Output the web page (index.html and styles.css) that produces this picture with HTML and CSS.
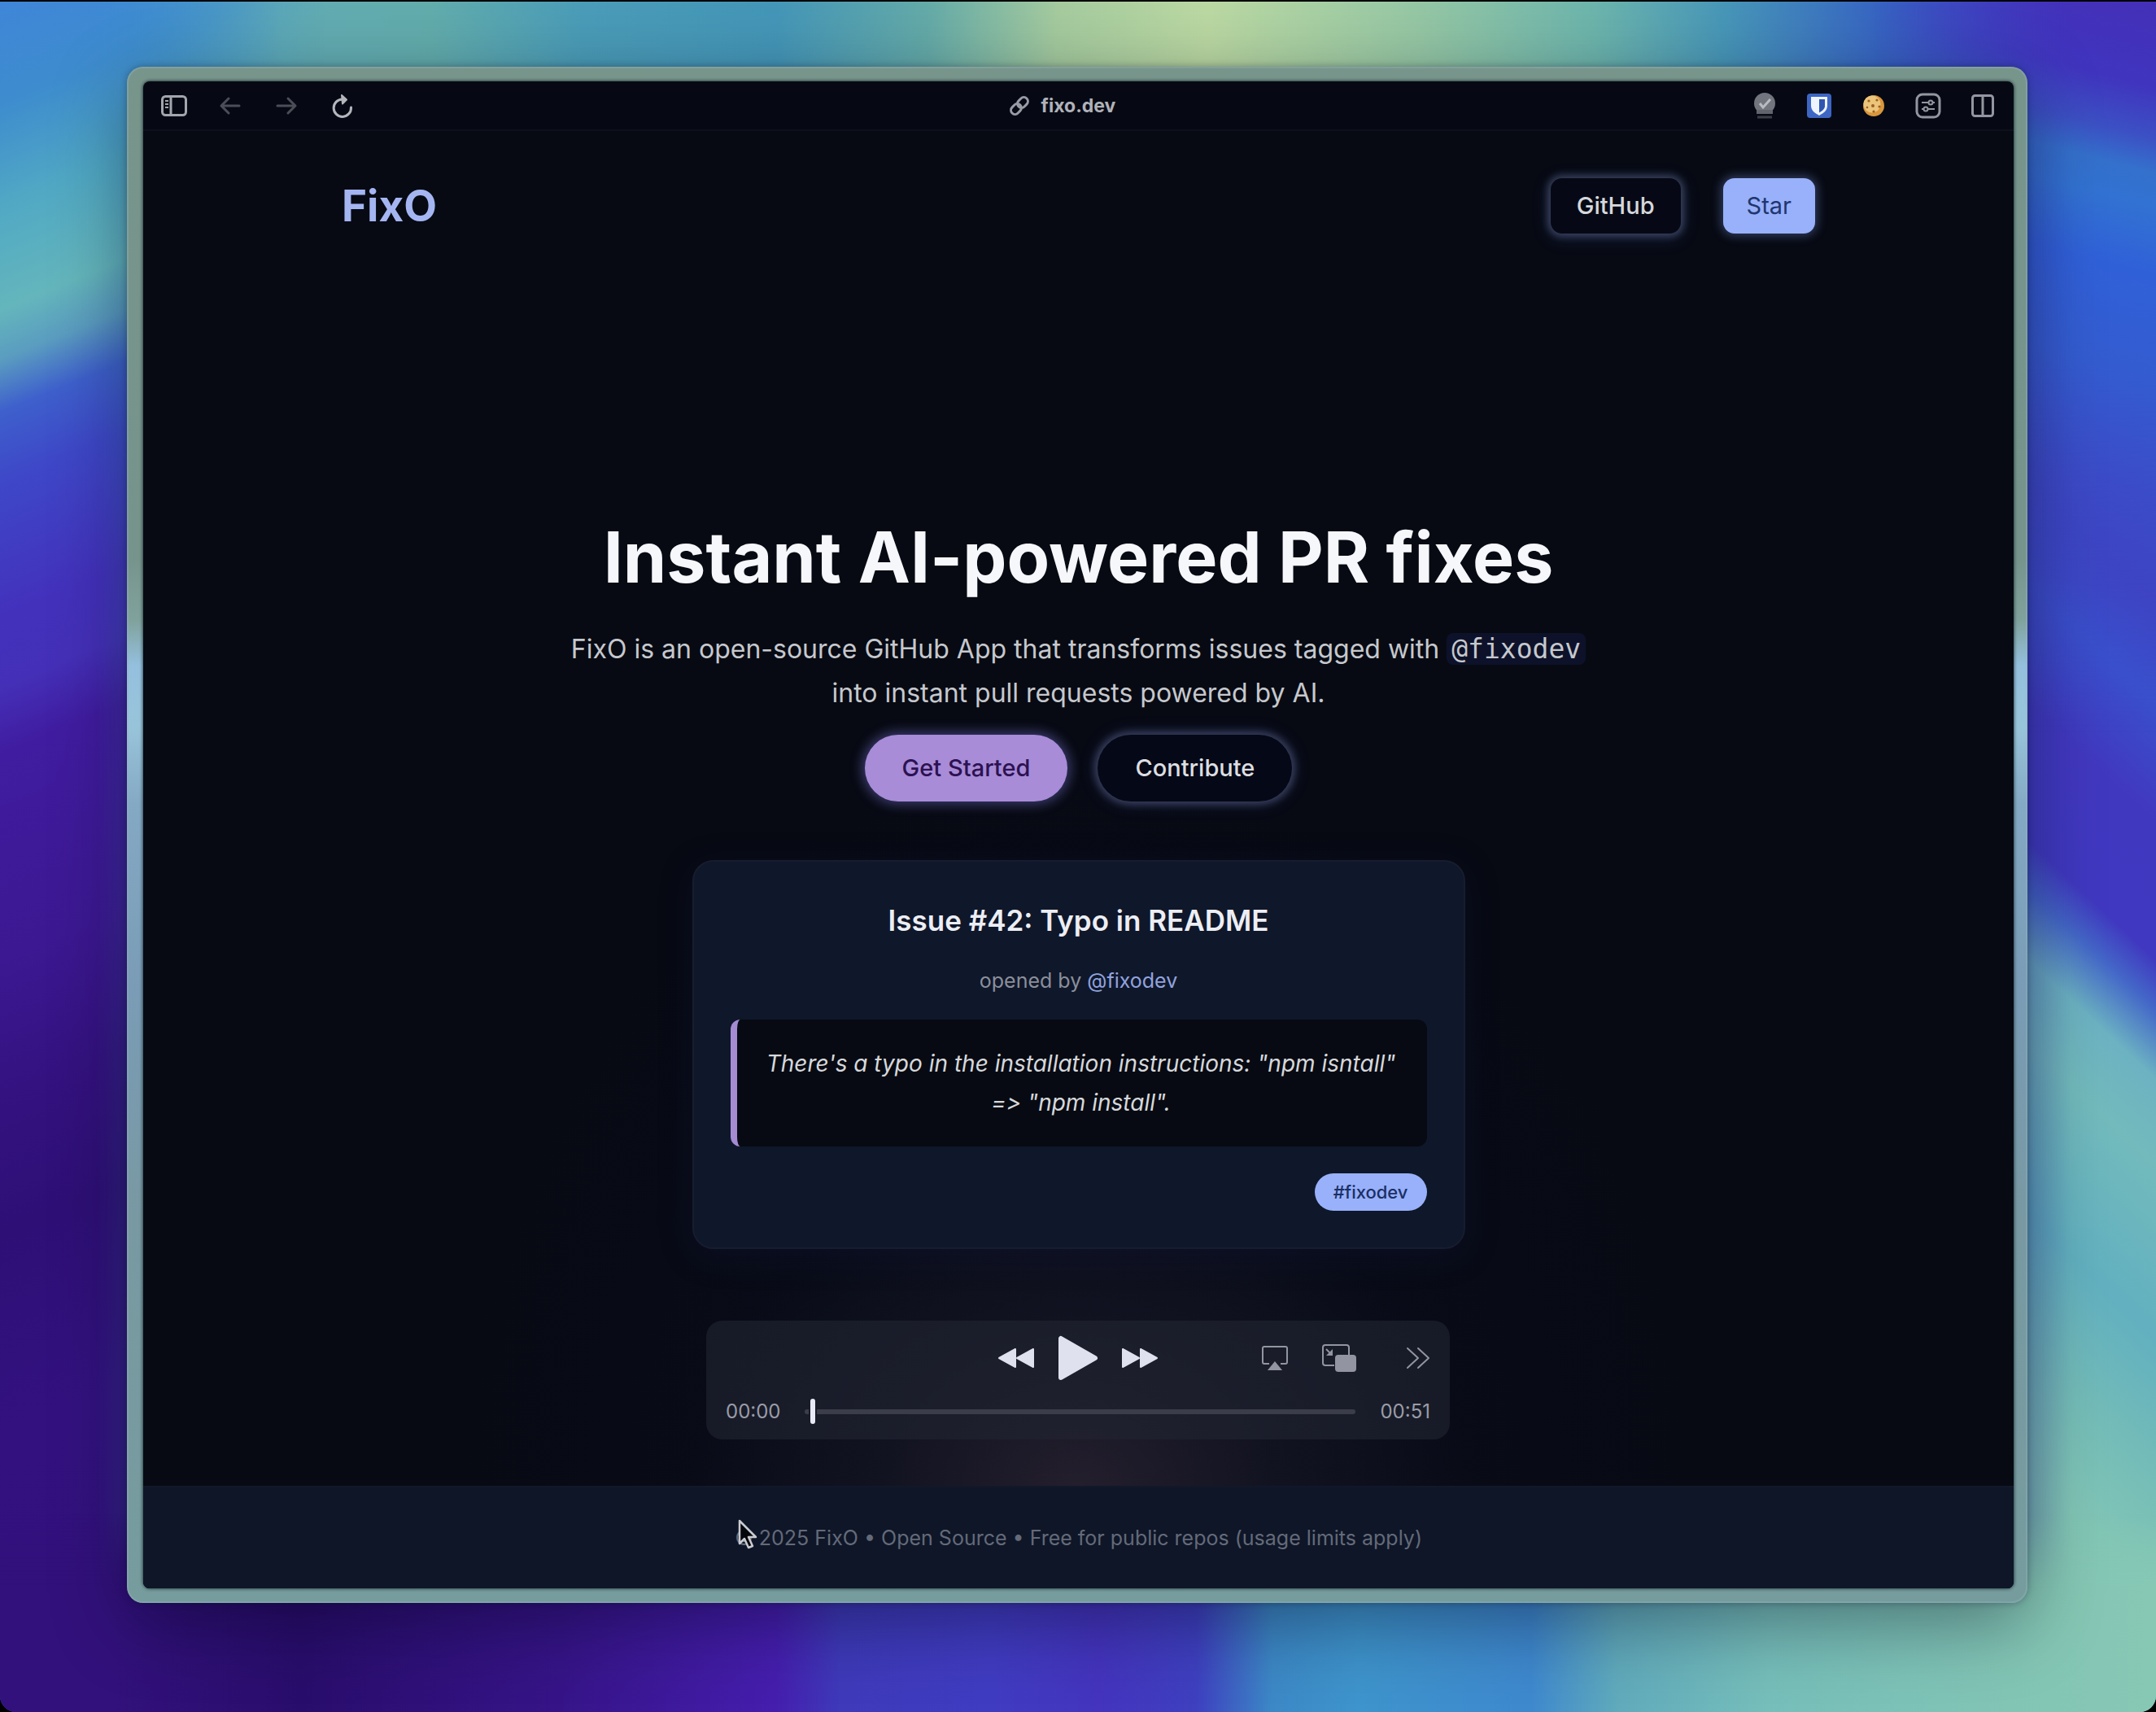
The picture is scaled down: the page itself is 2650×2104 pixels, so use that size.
FILE: index.html
```html
<!DOCTYPE html>
<html lang="en">
<head>
<meta charset="utf-8">
<meta name="viewport" content="width=device-width, initial-scale=1">
<title>FixO</title>
<link rel="stylesheet" href="styles.css">
</head>
<body>
<div class="desktop">
  <svg class="wallpaper" viewBox="0 0 2650 2104" preserveAspectRatio="none" aria-hidden="true">
    <defs>
      <linearGradient id="top" gradientUnits="userSpaceOnUse" x1="0" y1="0" x2="2650" y2="0">
        <stop offset="0" stop-color="#3f88d2"/><stop offset=".06" stop-color="#4092cc"/><stop offset=".13" stop-color="#62acb4"/><stop offset=".2" stop-color="#62acac"/><stop offset=".27" stop-color="#4a9cb8"/><stop offset=".36" stop-color="#4496b8"/><stop offset=".43" stop-color="#64aaa8"/><stop offset=".49" stop-color="#a4ca9e"/><stop offset=".56" stop-color="#bad8a2"/><stop offset=".66" stop-color="#94c6a4"/><stop offset=".74" stop-color="#6cb4ac"/><stop offset=".8" stop-color="#4796b8"/><stop offset=".87" stop-color="#3766c2"/><stop offset=".93" stop-color="#3c4cc2"/><stop offset="1" stop-color="#4430b4"/>
      </linearGradient>
      <linearGradient id="left" gradientUnits="userSpaceOnUse" x1="0" y1="0" x2="0" y2="2104" gradientTransform="skewY(-22)">
        <stop offset="0" stop-color="#3f86d8"/><stop offset=".06" stop-color="#3e8cce"/><stop offset=".12" stop-color="#50a8c4"/><stop offset=".18" stop-color="#64b6bc"/><stop offset=".21" stop-color="#5a9cc0"/><stop offset=".24" stop-color="#3e60cc"/><stop offset=".28" stop-color="#3e48c8"/><stop offset=".36" stop-color="#4331bc"/><stop offset=".4" stop-color="#4430b8"/><stop offset=".44" stop-color="#401ca0"/><stop offset=".56" stop-color="#3c1892"/><stop offset=".64" stop-color="#341280"/><stop offset=".72" stop-color="#2e0f76"/><stop offset=".84" stop-color="#331280"/><stop offset="1" stop-color="#32117c"/>
      </linearGradient>
      <linearGradient id="right" gradientUnits="userSpaceOnUse" x1="0" y1="0" x2="0" y2="2104" gradientTransform="translate(2650 0) skewY(43) translate(-2650 0)">
        <stop offset="0" stop-color="#4430b8"/><stop offset=".06" stop-color="#4036c0"/><stop offset=".1" stop-color="#3468cc"/><stop offset=".12" stop-color="#3272d2"/><stop offset=".16" stop-color="#3060d8"/><stop offset=".22" stop-color="#345cd0"/><stop offset=".29" stop-color="#3c4cc8"/><stop offset=".35" stop-color="#3e44c4"/><stop offset=".41" stop-color="#3a50cc"/><stop offset=".48" stop-color="#4138c0"/><stop offset=".56" stop-color="#4038c0"/><stop offset=".59" stop-color="#4468c8"/><stop offset=".63" stop-color="#6cb2c2"/><stop offset=".68" stop-color="#72babc"/><stop offset=".78" stop-color="#62b0c0"/><stop offset=".86" stop-color="#74bcb8"/><stop offset=".93" stop-color="#82c6b6"/><stop offset="1" stop-color="#86c8b4"/>
      </linearGradient>
      <linearGradient id="rightTop" gradientUnits="userSpaceOnUse" x1="0" y1="0" x2="0" y2="2104" gradientTransform="translate(2650 0) skewY(14) translate(-2650 0)">
        <stop offset="0" stop-color="#4430b8"/><stop offset=".05" stop-color="#4034be"/><stop offset=".08" stop-color="#3c50c4"/><stop offset=".1" stop-color="#3470cc"/><stop offset=".12" stop-color="#3272d2"/><stop offset=".16" stop-color="#3060d8"/><stop offset=".22" stop-color="#345cd0"/><stop offset=".29" stop-color="#3c4cc8"/><stop offset=".35" stop-color="#3e44c4"/><stop offset=".4" stop-color="#3a50cc"/><stop offset=".48" stop-color="#4138c0"/>
      </linearGradient>
      <linearGradient id="bottom" gradientUnits="userSpaceOnUse" x1="0" y1="0" x2="2650" y2="0">
        <stop offset="0" stop-color="#32117c"/><stop offset=".05" stop-color="#32117c"/><stop offset=".14" stop-color="#290d6c"/><stop offset=".26" stop-color="#361488"/><stop offset=".36" stop-color="#451eae"/><stop offset=".39" stop-color="#3e3aba"/><stop offset=".46" stop-color="#403cc2"/><stop offset=".51" stop-color="#4434be"/><stop offset=".555" stop-color="#3e40c0"/><stop offset=".59" stop-color="#3c88c6"/><stop offset=".63" stop-color="#3e94cc"/><stop offset=".71" stop-color="#3e88ce"/><stop offset=".75" stop-color="#60aabc"/><stop offset=".82" stop-color="#76beba"/><stop offset=".95" stop-color="#84c6b4"/><stop offset="1" stop-color="#86c8b4"/>
      </linearGradient>
      <linearGradient id="fadeLeft"><stop offset=".3" stop-color="#fff"/><stop offset="1" stop-color="#000"/></linearGradient>
      <linearGradient id="fadeRight"><stop offset="0" stop-color="#000"/><stop offset=".7" stop-color="#fff"/></linearGradient>
      <linearGradient id="fadeBottom" x2="0" y2="1"><stop offset="0" stop-color="#000"/><stop offset="1" stop-color="#fff"/></linearGradient>
      <linearGradient id="fadeDown" x2="0" y2="1"><stop offset=".5" stop-color="#fff"/><stop offset="1" stop-color="#fff" stop-opacity="0"/></linearGradient>
      <mask id="maskLeft"><rect width="400" height="2104" fill="url(#fadeLeft)"/></mask>
      <mask id="maskRight"><rect x="2300" width="350" height="2104" fill="url(#fadeRight)"/></mask>
      <mask id="maskRightTop"><rect x="2300" width="350" height="900" fill="url(#fadeDown)"/></mask>
      <mask id="maskBottom"><rect y="1860" width="2650" height="90" fill="url(#fadeBottom)"/><rect y="1950" width="2650" height="154" fill="#fff"/></mask>
    </defs>
    <rect width="2650" height="2104" fill="url(#top)"/>
    <rect width="400" height="2104" fill="url(#left)" mask="url(#maskLeft)"/>
    <g mask="url(#maskRight)">
      <rect x="2300" width="350" height="2104" fill="url(#right)"/>
      <rect x="2300" width="350" height="900" fill="url(#rightTop)" mask="url(#maskRightTop)"/>
    </g>
    <rect y="1860" width="2650" height="244" fill="url(#bottom)" mask="url(#maskBottom)"/>
  </svg>

  <div class="window">
    <div class="browser">
      <div class="toolbar">
        <div class="tools tools-left">
          <button class="tool" type="button" aria-label="Toggle sidebar">
            <svg width="34" height="28" viewBox="0 0 34 28" fill="none" stroke="#a3a5ad" stroke-width="3"><rect x="2.500" y="2.500" width="29" height="23" rx="4"/><path d="M13 3v22"/><path d="M6 8h4M6 12h4M6 16h4" stroke-width="2"/></svg>
          </button>
          <button class="tool" type="button" aria-label="Back">
            <svg width="28" height="24" viewBox="0 0 28 24" fill="none" stroke="#4b4d57" stroke-width="3" stroke-linecap="round" stroke-linejoin="round"><path d="M25 12H3M12 3L3 12l9 9"/></svg>
          </button>
          <button class="tool" type="button" aria-label="Forward">
            <svg width="28" height="24" viewBox="0 0 28 24" fill="none" stroke="#4b4d57" stroke-width="3" stroke-linecap="round" stroke-linejoin="round"><path d="M3 12h22M16 3l9 9-9 9"/></svg>
          </button>
          <button class="tool" type="button" aria-label="Reload">
            <svg width="28" height="32" viewBox="0 0 28 32" fill="none" stroke="#b4b6bc" stroke-width="3" stroke-linecap="round"><path d="M24.500 18A10.700 10.700 0 1 1 14 8"/><path d="M13 3l6 5.500-5 5z" fill="#b4b6bc" stroke-width="2" stroke-linejoin="round"/></svg>
          </button>
        </div>
        <div class="address">
          <svg width="26" height="26" viewBox="0 0 26 26" fill="none" stroke="#9a9ca5" stroke-width="3"><rect x="-7" y="-5" width="14" height="10" rx="5" transform="translate(9 17) rotate(-45)"/><rect x="-7" y="-5" width="14" height="10" rx="5" transform="translate(17 9) rotate(-45)"/></svg>
          <span>fixo.dev</span>
        </div>
        <div class="tools tools-right">
          <button class="tool" type="button" aria-label="Verification">
            <svg width="28" height="34" viewBox="0 0 28 34"><circle cx="14" cy="14" r="13" fill="#73757e"/><path d="M4 22v5h20v-5z" fill="#62646c"/><path d="M5 31h18" stroke="#3c3e46" stroke-width="3"/><path d="M8 14l4 5 9-10" fill="none" stroke="#b9bbc0" stroke-width="3"/></svg>
          </button>
          <button class="tool" type="button" aria-label="Password manager">
            <svg width="32" height="32" viewBox="0 0 32 32"><rect x="1" y="1" width="30" height="30" rx="4" fill="#3d66c4"/><path d="M6 5h20v11c0 6-5 9-10 12C11 25 6 22 6 16z" fill="#eef3ff"/><path d="M16 8h7v8c0 4-3 6-7 8.500z" fill="#2f56b0"/></svg>
          </button>
          <button class="tool" type="button" aria-label="Cookies">
            <svg width="30" height="30" viewBox="0 0 30 30"><circle cx="15" cy="15" r="13" fill="#d9963c"/><circle cx="13" cy="13" r="10.500" fill="#ecc47a"/><g fill="#9a6224"><circle cx="9" cy="9" r="1.600"/><circle cx="19" cy="8" r="1.600"/><circle cx="14" cy="15" r="2"/><circle cx="7" cy="17" r="1.300"/><circle cx="22" cy="16" r="1.600"/><circle cx="15" cy="22" r="1.600"/></g></svg>
          </button>
          <button class="tool" type="button" aria-label="Site settings">
            <svg width="32" height="32" viewBox="0 0 32 32" fill="none" stroke="#94969f" stroke-width="3"><rect x="2" y="2" width="28" height="28" rx="7"/><path d="M8 12h16M8 20h16" stroke-width="2"/><circle cx="19" cy="12" r="2.500" fill="#070a14" stroke-width="2"/><circle cx="13" cy="20" r="2.500" fill="#070a14" stroke-width="2"/></svg>
          </button>
          <button class="tool" type="button" aria-label="Split view">
            <svg width="30" height="30" viewBox="0 0 30 30" fill="none" stroke="#94969f" stroke-width="3"><rect x="2.500" y="2.500" width="25" height="25" rx="3"/><path d="M15 3v24"/></svg>
          </button>
        </div>
      </div>

      <div class="page">
        <header class="header">
          <a class="logo" href="#">FixO</a>
          <nav class="nav">
            <a class="nav-link" href="#">GitHub</a>
            <a class="nav-link nav-link-star" href="#">Star</a>
          </nav>
        </header>

        <main class="hero">
          <h1 class="title">Instant AI-powered PR fixes</h1>
          <p class="lead">FixO is an open-source GitHub App that transforms issues tagged with <code class="mention">@fixodev</code><br>into instant pull requests powered by AI.</p>
          <div class="actions">
            <a class="action action-primary" href="#">Get Started</a>
            <a class="action" href="#">Contribute</a>
          </div>
          <article class="issue">
            <h2 class="issue-title">Issue #42: Typo in README</h2>
            <p class="issue-meta">opened by <a href="#">@fixodev</a></p>
            <blockquote class="issue-quote">There's a typo in the installation instructions: "npm isntall"<br>=&gt; "npm install".</blockquote>
            <span class="tag">#fixodev</span>
          </article>
        </main>

        <footer class="footer">© 2025 FixO • Open Source • Free for public repos (usage limits apply)</footer>
      </div>
    </div>
  </div>

  <div class="player">
    <div class="controls">
      <div class="transport">
        <button type="button" aria-label="Rewind">
          <svg width="46" height="28" viewBox="0 0 46 28" fill="#dfe1ef" stroke="#dfe1ef" stroke-width="2" stroke-linejoin="round"><path d="M22 3v22L2 14zM44 3v22L24 14z"/></svg>
        </button>
        <button type="button" aria-label="Play">
          <svg width="50" height="58" viewBox="0 0 50 58" fill="#dfe1ef" stroke="#dfe1ef" stroke-width="6" stroke-linejoin="round"><path d="M4 5v48l42-24z"/></svg>
        </button>
        <button type="button" aria-label="Fast forward">
          <svg width="46" height="28" viewBox="0 0 46 28" fill="#dfe1ef" stroke="#dfe1ef" stroke-width="2" stroke-linejoin="round"><path d="M2 3v22l20-11zM24 3v22l20-11z"/></svg>
        </button>
      </div>
      <div class="extras">
        <button type="button" aria-label="AirPlay">
          <svg width="34" height="32" viewBox="0 0 34 32" fill="none" stroke="#9394a2" stroke-width="2"><path d="M10 23H4a2 2 0 0 1-2-2V4a2 2 0 0 1 2-2h26a2 2 0 0 1 2 2v17a2 2 0 0 1-2 2h-6"/><path d="M17 20l9 11H8z" fill="#9394a2" stroke="none"/></svg>
        </button>
        <button type="button" aria-label="Picture in picture">
          <svg width="44" height="36" viewBox="0 0 44 36"><path d="M16 27H5a3 3 0 0 1-3-3V5a3 3 0 0 1 3-3h26a3 3 0 0 1 3 3v9" fill="none" stroke="#9394a2" stroke-width="2"/><rect x="17" y="14" width="26" height="21" rx="4" fill="#9394a2"/><path d="M6 7l6 6" stroke="#9394a2" stroke-width="2"/><path d="M14 7v8H6z" fill="#9394a2"/></svg>
        </button>
        <button class="more" type="button" aria-label="More controls">
          <svg width="30" height="28" viewBox="0 0 30 28" fill="none" stroke="#9394a2" stroke-width="2" stroke-linecap="round" stroke-linejoin="round"><path d="M2 2l13 12L2 26M15 2l13 12-13 12"/></svg>
        </button>
      </div>
    </div>
    <div class="timeline">
      <span>00:00</span>
      <input class="scrubber" type="range" min="0" max="51" step="any" value="0.5" aria-label="Playback position">
      <span>00:51</span>
    </div>
  </div>

  <svg class="cursor" width="24" height="38" viewBox="0 0 24 38" aria-hidden="true"><path d="M2 2v28l6-6 5 11 5-2-5-11h9z" fill="#05070c" stroke="#c9cbd0" stroke-width="2.500" stroke-linejoin="round"/></svg>
</div>
</body>
</html>
```
FILE: styles.css
```css
* {
  box-sizing: border-box;
}

html {
  background: #000;
}

body {
  margin: 0;
  font-family: Inter, "Liberation Sans", sans-serif;
  color: #e2e4ea;
}

h1, h2, p, blockquote {
  margin: 0;
}

a {
  color: inherit;
  text-decoration: none;
}

button {
  display: grid;
  place-items: center;
  padding: 0;
  border: 0;
  background: none;
}

svg {
  display: block;
}

/* Desktop and window frame */
.desktop {
  position: relative;
  display: flex;
  min-height: 100vh;
  padding: 80px 158px 134px 156px;
  border-top: 2px solid #000;
  border-radius: 0 0 20px 20px;
  overflow: hidden;
}

.wallpaper {
  position: absolute;
  inset: 0;
  width: 100%;
  height: 100%;
}

.window {
  position: relative;
  display: flex;
  flex: 1;
  padding: 18px 17px 18px 20px;
  border-radius: 20px;
  background: linear-gradient(#78958c 0, #76948c 32%, #80a29c 36%, #94c0de 39%, #98c4da 43%, #84a9c4 48%, #7a9cb6 60%, #7899a2 75%, #769c9e 100%);
  box-shadow: inset 0 0 0 2px rgba(150, 180, 185, .35), 0 0 8px rgba(0, 10, 30, .3), 0 24px 90px rgba(0, 0, 20, .4);
}

.browser {
  display: flex;
  flex: 1;
  flex-direction: column;
  border-radius: 8px;
  background: #060914;
  box-shadow: 0 0 4px #0a1c20;
  overflow: hidden;
}

/* Browser toolbar */
.toolbar {
  display: grid;
  grid-template-columns: 1fr auto 1fr;
  align-items: center;
  height: 61px;
  padding: 0 18px;
  border-bottom: 2px solid #0e111b;
}

.tools {
  display: flex;
}

.tools-left {
  gap: 29px;
}

.tools-right {
  gap: 27px;
  justify-content: flex-end;
}

.tool {
  width: 40px;
  height: 40px;
}

.address {
  display: flex;
  align-items: center;
  gap: 14px;
  margin-right: 40px;
  font-size: 23px;
  font-weight: 700;
  line-height: 32px;
  color: #b0b2b9;
}

/* FixO landing page */
.page {
  display: flex;
  flex: 1;
  flex-direction: column;
  background:
    radial-gradient(480px 380px at 50% calc(100% - 126px), rgba(44, 36, 50, .75), rgba(30, 28, 44, .4) 50%, transparent),
    radial-gradient(760px 900px at 50% calc(100% - 126px), rgba(16, 20, 44, .4), transparent),
    #070a13;
}

.header {
  display: flex;
  align-items: center;
  justify-content: space-between;
  height: 184px;
  padding: 0 244px;
}

.logo {
  font-size: 53px;
  font-weight: 700;
  line-height: 64px;
  color: #a4b5f2;
}

.nav {
  display: flex;
  gap: 52px;
}

.nav-link {
  padding: 0 32px;
  border-radius: 14px;
  background: #060915;
  box-shadow: 0 0 8px 4px rgba(110, 124, 165, .42), 0 4px 20px 4px rgba(80, 100, 200, .18);
  font-size: 29px;
  font-weight: 500;
  line-height: 68px;
  color: #d6d8dc;
}

.nav-link-star {
  padding: 0 29px;
  background: #98b1fa;
  box-shadow: 0 0 12px 3px rgba(110, 130, 200, .42);
  font-weight: 400;
  color: #21356f;
}

.hero {
  display: flex;
  flex: 1;
  flex-direction: column;
  align-items: center;
  justify-content: center;
  text-align: center;
}

.title {
  font-size: 86px;
  font-weight: 700;
  line-height: 96px;
  color: #f5f7fb;
}

.lead {
  margin-top: 38px;
  font-size: 32px;
  line-height: 54px;
  color: #c6c8cd;
}

.mention {
  padding: 0 6px;
  border-radius: 8px;
  background: #0d122a;
  font-family: "DejaVu Sans Mono", monospace;
  font-size: 33px;
}

.actions {
  display: flex;
  gap: 37px;
  margin-top: 24px;
}

.action {
  padding: 0 46px;
  border-radius: 41px;
  background: #050816;
  box-shadow: 0 0 8px 4px rgba(110, 118, 160, .42), 0 0 20px 4px rgba(80, 90, 200, .2);
  font-size: 29px;
  font-weight: 500;
  line-height: 82px;
  color: #dcdee2;
}

.action-primary {
  background: #a88cd8;
  box-shadow: 0 0 14px 4px rgba(120, 115, 210, .45);
  color: #2c1252;
}

.issue {
  display: flex;
  flex-direction: column;
  width: 950px;
  margin-top: 72px;
  padding: 45px;
  border: 2px solid #171d2e;
  border-radius: 26px;
  background: #0f172a;
  box-shadow: 0 8px 40px rgba(20, 25, 70, .25);
}

.issue-title {
  font-size: 35px;
  font-weight: 600;
  line-height: 54px;
  color: #eceef4;
}

.issue-meta {
  margin-top: 26px;
  font-size: 25px;
  line-height: 42px;
  color: #8b8f9a;
}

.issue-meta a {
  color: #91a3de;
}

.issue-quote {
  margin-top: 27px;
  padding: 30px 24px 30px 22px;
  border-left: 8px solid #a48bd2;
  border-radius: 12px;
  background: #070a12;
  font-size: 28px;
  font-style: italic;
  font-variant-ligatures: no-contextual;
  line-height: 48px;
  color: #d6d8dc;
}

.tag {
  align-self: flex-end;
  margin-top: 33px;
  padding: 0 23px;
  border-radius: 24px;
  background: #98b1fa;
  font-size: 22px;
  font-weight: 500;
  line-height: 46px;
  color: #1c2f66;
}

.footer {
  padding: 40px 24px;
  border-top: 2px solid #12182a;
  background: #0e1628;
  font-size: 25px;
  line-height: 44px;
  text-align: center;
  color: #646a78;
}

/* Floating playback controls */
.player {
  position: absolute;
  bottom: 335px;
  left: 50%;
  width: 914px;
  height: 146px;
  padding: 16px 24px;
  border-radius: 20px;
  background: rgba(34, 37, 50, .6);
  transform: translateX(-50%);
}

.controls {
  display: grid;
  grid-template-columns: 1fr auto 1fr;
  align-items: center;
  height: 60px;
}

.transport {
  display: flex;
  grid-column: 2;
  align-items: center;
  gap: 28px;
}

.extras {
  display: flex;
  align-items: center;
  justify-content: flex-end;
  gap: 40px;
}

.more {
  margin-left: 20px;
}

.timeline {
  display: flex;
  align-items: center;
  gap: 30px;
  margin-top: 20px;
  font-size: 24px;
  line-height: 32px;
  color: #9a9ca8;
}

.scrubber {
  flex: 1;
  min-width: 0;
  height: 32px;
  margin: 0;
  background: none;
  appearance: none;
}

.scrubber::-webkit-slider-runnable-track {
  height: 6px;
  border-radius: 3px;
  background: #3b3d4b;
}

.scrubber::-webkit-slider-thumb {
  width: 6px;
  height: 31px;
  margin-top: -13px;
  border-radius: 3px;
  background: #e8eaf6;
  box-shadow: 0 0 0 2px #1a1d28;
  appearance: none;
}

.cursor {
  position: absolute;
  top: 1865px;
  left: 907px;
}
```
